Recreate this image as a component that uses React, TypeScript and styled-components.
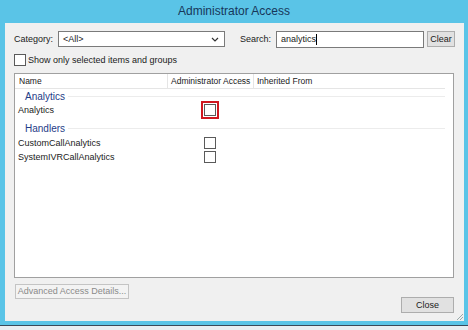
import React from 'react';
import styled, { createGlobalStyle } from 'styled-components';

const GlobalStyle = createGlobalStyle`
  html, body {
    margin: 0;
    padding: 0;
    width: 468px;
    height: 330px;
    overflow: hidden;
    background: #5ac4e7;
    font-family: "Liberation Sans", Arial, sans-serif;
    font-size: 9px;
    color: #1a1a1a;
  }
`;

const Frame = styled.div`
  width: 468px;
  height: 330px;
  display: flex;
  flex-direction: column;
  background: #5ac4e7;
`;

const TitleBar = styled.div`
  height: 23px;
  display: flex;
  align-items: center;
  justify-content: center;
  font-size: 12px;
  color: #17375a;
  box-sizing: border-box;
`;

const Client = styled.div`
  margin: 0 4px 0 5px;
  height: 299px;
  background: #f0f0f0;
  display: flex;
  flex-direction: column;
  padding: 8px 10px 0 9px;
  box-sizing: border-box;
  position: relative;
`;

const TopRow = styled.div`
  display: flex;
  align-items: center;
  height: 17px;
  white-space: nowrap;
`;

const Label = styled.span<{ $w: number }>`
  width: ${p => p.$w}px;
  flex: none;
`;

const Select = styled.div`
  width: 167px;
  height: 16px;
  flex: none;
  border: 1px solid #7a7a7a;
  background: #fff;
  display: flex;
  align-items: center;
  justify-content: space-between;
  padding: 0 5px 0 4px;
  box-sizing: border-box;
`;

const Gap = styled.div<{ $w: number }>`
  width: ${p => p.$w}px;
  flex: none;
`;

const SearchBox = styled.div`
  width: 148px;
  height: 17px;
  flex: none;
  border: 1px solid #7a7a7a;
  background: #fff;
  padding: 0 4px;
  box-sizing: border-box;
  display: flex;
  align-items: center;
`;

const Caret = styled.span`
  display: inline-block;
  width: 1px;
  height: 11px;
  background: #000;
`;

const SmallButton = styled.div`
  margin-left: 3px;
  width: 28px;
  height: 16px;
  flex: none;
  border: 1px solid #adadad;
  background: #e1e1e1;
  display: flex;
  align-items: center;
  justify-content: center;
  box-sizing: border-box;
`;

const CheckRow = styled.div`
  display: flex;
  align-items: center;
  margin-top: 6px;
  height: 12px;
`;

const CheckText = styled.span`
  margin-left: 2px;
`;

const Box = styled.div<{ $red?: boolean }>`
  width: 12px;
  height: 12px;
  border: 1px solid #5a5a5a;
  background: #fff;
  box-sizing: border-box;
  flex: none;
  ${p => p.$red ? 'outline: 2px solid #d0161f; outline-offset: 1px;' : ''}
`;

const List = styled.div`
  margin-top: 7px;
  width: 440px;
  height: 205px;
  border: 1px solid #a0a0a0;
  background: #fff;
  box-sizing: border-box;
  display: flex;
  flex-direction: column;
`;

const Header = styled.div`
  display: grid;
  grid-template-columns: 153px 86px 1fr;
  height: 14px;
  border-bottom: 1px solid #e5e5e5;
  flex: none;
  font-size: 8.5px;
  margin-right: 8px;
`;

const HeadCell = styled.div<{ $pad: number; $last?: boolean }>`
  display: flex;
  align-items: center;
  padding-left: ${p => p.$pad}px;
  border-right: ${p => p.$last ? 'none' : '1px solid #e5e5e5'};
  white-space: nowrap;
  overflow: hidden;
`;

const Group = styled.div<{ $h: number; $top: number }>`
  display: flex;
  align-items: center;
  height: ${p => p.$h}px;
  padding-top: ${p => p.$top}px;
  box-sizing: border-box;
  padding-left: 10px;
  color: #1e3c87;
  font-size: 10px;
  margin-right: 8px;
  flex: none;
  &::after {
    content: '';
    flex: 1;
    height: 1px;
    background: #ececec;
    margin-left: 3px;
  }
`;

const Row = styled.div<{ $h: number }>`
  display: grid;
  grid-template-columns: 153px 86px 1fr;
  height: ${p => p.$h}px;
  align-items: center;
  flex: none;
`;

const Cell = styled.div`
  padding-left: 3px;
  white-space: nowrap;
`;

const CheckCell = styled.div`
  display: flex;
  justify-content: center;
  padding-right: 2px;
`;

const AdvButton = styled.div`
  margin-top: 6px;
  margin-left: 1px;
  width: 114px;
  height: 15px;
  box-sizing: border-box;
  border: 1px solid #c4c4c4;
  background: #f3f3f3;
  color: #8a8a8a;
  display: flex;
  align-items: center;
  justify-content: center;
`;

const CloseRow = styled.div`
  display: flex;
  justify-content: flex-end;
  margin-top: -2px;
`;

const CloseButton = styled.div`
  width: 53px;
  height: 16px;
  box-sizing: border-box;
  border: 1px solid #adadad;
  background: #e1e1e1;
  display: flex;
  align-items: center;
  justify-content: center;
`;

const Grip = styled.svg`
  position: absolute;
  right: 0;
  bottom: 0;
`;

const Taskbar = styled.div`
  margin-top: 4px;
  height: 4px;
  background: #e9eef2;
  border-top: 1px solid #3a4a5a;
`;

const rows = [
  { group: 'Analytics', gh: 13, gt: 2, items: [{ name: 'Analytics', red: true, h: 16 }] },
  { group: 'Handlers', gh: 18, gt: 3, items: [{ name: 'CustomCallAnalytics', h: 14 }, { name: 'SystemIVRCallAnalytics', h: 14 }] },
];

const App = () => {
  return (
    <Frame>
      <GlobalStyle />
      <TitleBar>Administrator Access</TitleBar>
      <Client>
        <TopRow>
          <Gap $w={-1} />
          <Label $w={44}>Category:</Label>
          <Select>
            <span>&lt;All&gt;</span>
            <svg width="8" height="5" viewBox="0 0 8 5">
              <path d="M1 1 L4 4 L7 1" stroke="#333" strokeWidth="1.2" fill="none" />
            </svg>
          </Select>
          <Gap $w={15} />
          <Label $w={36}>Search:</Label>
          <SearchBox>analytics<Caret /></SearchBox>
          <SmallButton>Clear</SmallButton>
        </TopRow>
        <CheckRow>
          <Box />
          <CheckText>Show only selected items and groups</CheckText>
        </CheckRow>
        <List>
          <Header>
            <HeadCell $pad={4}>Name</HeadCell>
            <HeadCell $pad={3}>Administrator Access</HeadCell>
            <HeadCell $pad={3} $last>Inherited From</HeadCell>
          </Header>
          {rows.map(g => (
            <React.Fragment key={g.group}>
              <Group $h={g.gh} $top={g.gt}>{g.group}</Group>
              {g.items.map(it => (
                <Row key={it.name} $h={it.h}>
                  <Cell>{it.name}</Cell>
                  <CheckCell>
                    <Box $red={it.red} />
                  </CheckCell>
                  <div />
                </Row>
              ))}
            </React.Fragment>
          ))}
        </List>
        <AdvButton>Advanced Access Details...</AdvButton>
        <CloseRow>
          <CloseButton>Close</CloseButton>
        </CloseRow>
        <Grip width="10" height="10" viewBox="0 0 10 10">
          <path d="M9 3 L3 9 M9 6 L6 9" stroke="#9aa" strokeWidth="1" />
        </Grip>
      </Client>
      <Taskbar />
    </Frame>
  );
};

export default App;
